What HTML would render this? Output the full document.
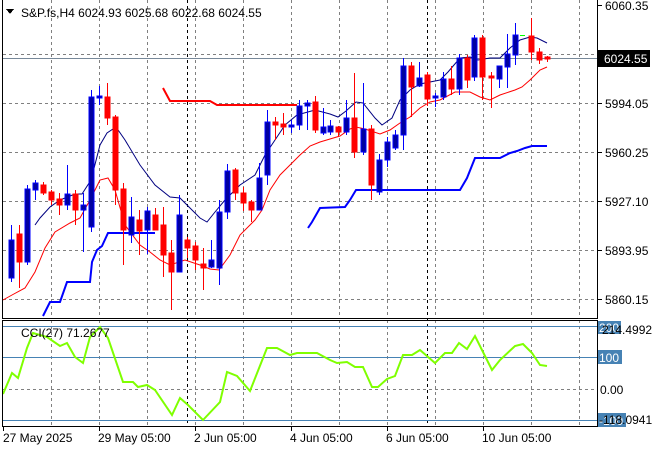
<!DOCTYPE html>
<html><head><meta charset="utf-8"><style>
html,body{margin:0;padding:0;background:#fff;}
svg{display:block;}
text{font-family:"Liberation Sans",sans-serif;font-size:12px;fill:#000;}
</style></head><body>
<svg width="660" height="450" xmlns="http://www.w3.org/2000/svg" shape-rendering="crispEdges">
<rect width="660" height="450" fill="#fff"/>
<!-- grid main -->
<g stroke="#808080" stroke-dasharray="3,3" stroke-width="1">
<line x1="3" y1="54.5" x2="597" y2="54.5"/><line x1="3" y1="103.5" x2="597" y2="103.5"/><line x1="3" y1="152.5" x2="597" y2="152.5"/><line x1="3" y1="201.5" x2="597" y2="201.5"/><line x1="3" y1="250.5" x2="597" y2="250.5"/><line x1="3" y1="299.5" x2="597" y2="299.5"/>
<line x1="51.5" y1="0" x2="51.5" y2="318"/><line x1="99.5" y1="0" x2="99.5" y2="318"/><line x1="147.5" y1="0" x2="147.5" y2="318"/><line x1="243.5" y1="0" x2="243.5" y2="318"/><line x1="291.5" y1="0" x2="291.5" y2="318"/><line x1="339.5" y1="0" x2="339.5" y2="318"/><line x1="387.5" y1="0" x2="387.5" y2="318"/><line x1="483.5" y1="0" x2="483.5" y2="318"/><line x1="531.5" y1="0" x2="531.5" y2="318"/><line x1="579.5" y1="0" x2="579.5" y2="318"/>
<line x1="195.5" y1="0" x2="195.5" y2="318"/><line x1="435.5" y1="0" x2="435.5" y2="318"/>
<line x1="51.5" y1="320" x2="51.5" y2="426"/><line x1="99.5" y1="320" x2="99.5" y2="426"/><line x1="147.5" y1="320" x2="147.5" y2="426"/><line x1="195.5" y1="320" x2="195.5" y2="426"/><line x1="243.5" y1="320" x2="243.5" y2="426"/><line x1="291.5" y1="320" x2="291.5" y2="426"/><line x1="339.5" y1="320" x2="339.5" y2="426"/><line x1="387.5" y1="320" x2="387.5" y2="426"/><line x1="435.5" y1="320" x2="435.5" y2="426"/><line x1="483.5" y1="320" x2="483.5" y2="426"/><line x1="531.5" y1="320" x2="531.5" y2="426"/><line x1="579.5" y1="320" x2="579.5" y2="426"/>
<line x1="3" y1="389.5" x2="597" y2="389.5"/>
</g>
<g stroke="#000" stroke-dasharray="3,3"><line x1="187.5" y1="0" x2="187.5" y2="426"/><line x1="427.5" y1="0" x2="427.5" y2="426"/></g>
<line x1="3" y1="58.5" x2="597" y2="58.5" stroke="#778899"/>
<!-- CCI levels -->
<g stroke="#4682b4"><line x1="3" y1="326.5" x2="597" y2="326.5"/><line x1="3" y1="357.5" x2="597" y2="357.5"/><line x1="3" y1="420.5" x2="597" y2="420.5"/></g>
<!-- thick lines -->
<g fill="none" stroke-width="2" shape-rendering="auto">
<polyline stroke="#ff0000" points="163,88 170,101 210,101 217,105 297,105"/>
<polyline stroke="#0000ff" points="43,316 50,302 60,302 67,282 90,282 92,262 97,250 102,246 108,233 155,233"/>
<polyline stroke="#0000ff" points="308,228 312,222 320,208 345,207 350,200 356,190 460,190 467,178 475,158 500,158 510,153 517,151 525,148 532,146 547,146"/>
</g>
<g fill="none" stroke-width="1" shape-rendering="auto">
<polyline stroke="#000080" points="35,225 40,218 50,207 60,200 75,194 82,194 91,180 100,145 107,133 116,127 125,140 140,165 155,185 170,197 180,198 187,205 200,218 207,222 215,212 225,200 240,185 255,175 265,155 275,140 285,125 297,115 315,110 330,114 338,117 346,111 356,102 363,103 375,118 382,125 392,118 400,100 410,90 420,84 430,82 440,80 448,72 460,58 470,57 478,60 490,58 500,58 510,48 520,40 530,37 537,38 547,43"/>
<polyline stroke="#ff0000" points="3,300 12,295 25,288 35,272 45,248 55,232 70,223 80,218 90,200 100,180 108,178 115,190 125,225 140,245 150,252 160,260 170,265 185,260 200,265 210,269 219,270 230,255 240,235 250,225 255,220 262,210 270,190 280,175 290,165 300,155 310,146 320,142 330,139 340,136 350,129 356,127 365,129 380,134 390,130 400,123 410,117 420,108 430,102 440,100 455,92 470,92 480,97 490,100 500,95 515,90 522,87 530,80 540,70 547,67"/>
</g>
<!-- candles -->
<g>
<g stroke="#0000ff" fill="#0000a0">
<line x1="11.5" y1="225" x2="11.5" y2="282"/><rect x="9" y="240" width="5" height="38"/>
<line x1="27.5" y1="185" x2="27.5" y2="265"/><rect x="25" y="189" width="5" height="73"/>
<line x1="35.5" y1="180" x2="35.5" y2="200"/><rect x="33" y="183" width="5" height="7"/>
<line x1="67.5" y1="165" x2="67.5" y2="210"/><rect x="65" y="194" width="5" height="11"/>
<line x1="83.5" y1="193" x2="83.5" y2="252"/><rect x="81" y="205" width="5" height="5"/>
<line x1="91.5" y1="90" x2="91.5" y2="232"/><rect x="89" y="97" width="5" height="130"/>
<line x1="99.5" y1="86" x2="99.5" y2="105"/><rect x="97" y="96" width="5" height="2"/>
<line x1="131.5" y1="197" x2="131.5" y2="243"/><rect x="129" y="217" width="5" height="18"/>
<line x1="147.5" y1="207" x2="147.5" y2="254"/><rect x="145" y="211" width="5" height="19"/>
<line x1="179.5" y1="195" x2="179.5" y2="272"/><rect x="177" y="215" width="5" height="57"/>
<line x1="211.5" y1="240" x2="211.5" y2="268"/><rect x="209" y="260" width="5" height="7"/>
<line x1="219.5" y1="200" x2="219.5" y2="285"/><rect x="217" y="212" width="5" height="56"/>
<line x1="227.5" y1="164" x2="227.5" y2="219"/><rect x="225" y="171" width="5" height="41"/>
<line x1="259.5" y1="163" x2="259.5" y2="210"/><rect x="257" y="178" width="5" height="32"/>
<line x1="267.5" y1="110" x2="267.5" y2="185"/><rect x="265" y="122" width="5" height="53"/>
<line x1="291.5" y1="120" x2="291.5" y2="133"/><rect x="289" y="125" width="5" height="2"/>
<line x1="299.5" y1="100" x2="299.5" y2="130"/><rect x="297" y="106" width="5" height="19"/>
<line x1="307.5" y1="100" x2="307.5" y2="130"/><rect x="305" y="103" width="5" height="3"/>
<line x1="323.5" y1="108" x2="323.5" y2="135"/><rect x="321" y="127" width="5" height="6"/>
<line x1="330.5" y1="120" x2="330.5" y2="135"/><rect x="328" y="126" width="5" height="6"/>
<line x1="346.5" y1="100" x2="346.5" y2="135"/><rect x="344" y="118" width="5" height="14"/>
<line x1="363.5" y1="83" x2="363.5" y2="155"/><rect x="361" y="129" width="5" height="23"/>
<line x1="379.5" y1="154" x2="379.5" y2="195"/><rect x="377" y="160" width="5" height="32"/>
<line x1="387.5" y1="137" x2="387.5" y2="167"/><rect x="385" y="142" width="5" height="18"/>
<line x1="395.5" y1="130" x2="395.5" y2="150"/><rect x="393" y="135" width="5" height="13"/>
<line x1="403.5" y1="58" x2="403.5" y2="150"/><rect x="401" y="66" width="5" height="69"/>
<line x1="419.5" y1="62" x2="419.5" y2="87"/><rect x="417" y="78" width="5" height="8"/>
<line x1="435.5" y1="93" x2="435.5" y2="107"/><rect x="433" y="96" width="5" height="2"/>
<line x1="443.5" y1="72" x2="443.5" y2="100"/><rect x="441" y="79" width="5" height="18"/>
<line x1="459.5" y1="54" x2="459.5" y2="95"/><rect x="457" y="58" width="5" height="31"/>
<line x1="474.5" y1="35" x2="474.5" y2="81"/><rect x="472" y="38" width="5" height="39"/>
<line x1="499.5" y1="66" x2="499.5" y2="88"/><rect x="497" y="66" width="5" height="13"/>
<line x1="507.5" y1="34" x2="507.5" y2="88"/><rect x="505" y="54" width="5" height="13"/>
<line x1="515.5" y1="23" x2="515.5" y2="65"/><rect x="513" y="35" width="5" height="20"/>
</g>
<g stroke="#ff0000" fill="#ff0000">
<line x1="19.5" y1="225" x2="19.5" y2="288"/><rect x="17" y="234" width="5" height="28"/>
<line x1="43.5" y1="182" x2="43.5" y2="195"/><rect x="41" y="185" width="5" height="8"/>
<line x1="51.5" y1="190" x2="51.5" y2="205"/><rect x="49" y="192" width="5" height="8"/>
<line x1="59.5" y1="193" x2="59.5" y2="215"/><rect x="57" y="199" width="5" height="6"/>
<line x1="75.5" y1="190" x2="75.5" y2="225"/><rect x="73" y="194" width="5" height="16"/>
<line x1="107.5" y1="83" x2="107.5" y2="125"/><rect x="105" y="97" width="5" height="21"/>
<line x1="115.5" y1="115" x2="115.5" y2="205"/><rect x="113" y="117" width="5" height="73"/>
<line x1="123.5" y1="183" x2="123.5" y2="265"/><rect x="121" y="189" width="5" height="41"/>
<line x1="139.5" y1="210" x2="139.5" y2="255"/><rect x="137" y="220" width="5" height="11"/>
<line x1="155.5" y1="208" x2="155.5" y2="230"/><rect x="153" y="215" width="5" height="15"/>
<line x1="163.5" y1="207" x2="163.5" y2="277"/><rect x="161" y="225" width="5" height="30"/>
<line x1="171.5" y1="240" x2="171.5" y2="310"/><rect x="169" y="253" width="5" height="19"/>
<line x1="187.5" y1="237" x2="187.5" y2="258"/><rect x="185" y="240" width="5" height="8"/>
<line x1="195.5" y1="242" x2="195.5" y2="270"/><rect x="193" y="246" width="5" height="14"/>
<line x1="203.5" y1="248" x2="203.5" y2="290"/><rect x="201" y="264" width="5" height="4"/>
<line x1="235.5" y1="168" x2="235.5" y2="200"/><rect x="233" y="170" width="5" height="23"/>
<line x1="243.5" y1="187" x2="243.5" y2="211"/><rect x="241" y="193" width="5" height="10"/>
<line x1="251.5" y1="200" x2="251.5" y2="222"/><rect x="249" y="202" width="5" height="8"/>
<line x1="275.5" y1="117" x2="275.5" y2="140"/><rect x="273" y="122" width="5" height="3"/>
<line x1="283.5" y1="113" x2="283.5" y2="135"/><rect x="281" y="124" width="5" height="3"/>
<line x1="315.5" y1="96" x2="315.5" y2="133"/><rect x="313" y="102" width="5" height="28"/>
<line x1="338.5" y1="126" x2="338.5" y2="136"/><rect x="336" y="127" width="5" height="5"/>
<line x1="354.5" y1="73" x2="354.5" y2="158"/><rect x="352" y="118" width="5" height="34"/>
<line x1="371.5" y1="125" x2="371.5" y2="200"/><rect x="369" y="129" width="5" height="56"/>
<line x1="411.5" y1="62" x2="411.5" y2="117"/><rect x="409" y="66" width="5" height="21"/>
<line x1="427.5" y1="72" x2="427.5" y2="106"/><rect x="425" y="75" width="5" height="24"/>
<line x1="451.5" y1="66" x2="451.5" y2="95"/><rect x="449" y="79" width="5" height="10"/>
<line x1="467.5" y1="55" x2="467.5" y2="88"/><rect x="465" y="58" width="5" height="22"/>
<line x1="482.5" y1="35" x2="482.5" y2="100"/><rect x="480" y="38" width="5" height="39"/>
<line x1="491.5" y1="72" x2="491.5" y2="108"/><rect x="489" y="76" width="5" height="2"/>
<line x1="531.5" y1="18" x2="531.5" y2="60"/><rect x="529" y="36" width="5" height="16"/>
<line x1="539.5" y1="48" x2="539.5" y2="64"/><rect x="537" y="52" width="5" height="8"/>
<line x1="547.5" y1="56" x2="547.5" y2="62"/><rect x="545" y="57" width="5" height="2"/>
</g>
<line x1="520" y1="35.5" x2="525" y2="35.5" stroke="#00ff00"/>
</g>
<!-- CCI line -->
<polyline fill="none" stroke="#7fff00" stroke-width="2" shape-rendering="auto" points="3,394 12,373 18,378 27,348 33,333 47,337 60,346 67,343 75,357 83,363 90,337 100,327 108,338 123,382 133,382 138,387 147,385 155,390 172,415 180,398 188,405 203,420 220,402 227,372 237,376 250,391 267,348 277,348 290,355 297,353 317,353 330,360 337,363 347,362 355,367 363,367 372,387 378,387 387,379 395,376 403,355 412,355 420,350 435,363 445,353 452,353 459,343 467,349 475,336 492,370 500,360 515,346 523,344 532,353 540,365 547,366"/>
<!-- borders -->
<g stroke="#000" fill="none">
<line x1="2.5" y1="0" x2="2.5" y2="318"/>
<line x1="597.5" y1="0" x2="597.5" y2="318"/>
<line x1="2" y1="318.5" x2="598" y2="318.5"/>
<rect x="2.5" y="320.5" width="595" height="106"/>
</g>
<g stroke="#000"><line x1="3.5" y1="427" x2="3.5" y2="431"/><line x1="99.5" y1="427" x2="99.5" y2="431"/><line x1="195.5" y1="427" x2="195.5" y2="431"/><line x1="291.5" y1="427" x2="291.5" y2="431"/><line x1="387.5" y1="427" x2="387.5" y2="431"/><line x1="483.5" y1="427" x2="483.5" y2="431"/>
<line x1="598" y1="5.5" x2="602" y2="5.5"/><line x1="598" y1="103.5" x2="602" y2="103.5"/><line x1="598" y1="152.5" x2="602" y2="152.5"/><line x1="598" y1="201.5" x2="602" y2="201.5"/><line x1="598" y1="250.5" x2="602" y2="250.5"/><line x1="598" y1="299.5" x2="602" y2="299.5"/></g>
<!-- header -->
<polygon points="6,9 14,9 10,14" fill="#000"/>
<text x="21" y="17">S&amp;P.fs,H4  6024.93 6025.68 6022.68 6024.55</text>
<text x="21" y="337">CCI(27) 71.2677</text>
<!-- right axis -->
<text x="605" y="10">6060.35</text>
<rect x="598" y="50" width="52" height="17" fill="#000"/>
<text x="604" y="63" style="fill:#fff">6024.55</text>
<text x="605" y="108">5994.05</text>
<text x="605" y="157">5960.25</text>
<text x="605" y="206">5927.10</text>
<text x="605" y="255">5893.95</text>
<text x="605" y="304">5860.15</text>
<rect x="598" y="321" width="23" height="13" fill="#4682b4"/>
<text x="599" y="332" style="fill:#fff">200</text>
<text x="602" y="334">214.4992</text>
<rect x="598" y="350" width="24" height="14" fill="#4682b4"/>
<text x="599" y="362" style="fill:#fff">100</text>
<text x="600" y="394">0.00</text>
<rect x="598" y="413" width="28" height="14" fill="#4682b4"/>
<text x="599" y="425" style="fill:#fff">-100</text>
<text x="599" y="424">-118.0941</text>
<!-- time axis -->
<text x="3" y="442">27 May 2025</text>
<text x="98" y="442">29 May 05:00</text>
<text x="194" y="442">2 Jun 05:00</text>
<text x="290" y="442">4 Jun 05:00</text>
<text x="386" y="442">6 Jun 05:00</text>
<text x="482" y="442">10 Jun 05:00</text>
</svg>
</body></html>
